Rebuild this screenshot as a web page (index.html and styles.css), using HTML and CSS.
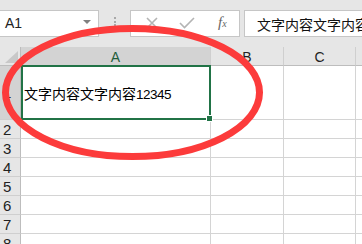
FILE: index.html
```html
<!DOCTYPE html>
<html>
<head>
<meta charset="utf-8">
<link rel="stylesheet" href="styles.css">
</head>
<body>
<div class="app">
  <div class="formula-row">
    <div class="namebox"><span class="nb-text">A1</span><span class="nb-arrow"></span></div>
    <div class="sep"><i></i><i></i><i></i></div>
    <div class="fbtns">
      <svg class="ic-x" width="12" height="12" viewBox="0 0 12 12"><path d="M1 1L11 11M11 1L1 11" stroke="#b4b4b4" stroke-width="1.6" fill="none"/></svg>
      <svg class="ic-check" width="16" height="12" viewBox="0 0 16 12"><path d="M1 6L5.5 10.5L15 1" stroke="#b4b4b4" stroke-width="1.6" fill="none"/></svg>
      <span class="fx">f<sub>x</sub></span>
    </div>
    <div class="finput">文字内容文字内容文字内容12345</div>
  </div>
  <div class="grid">
    <div class="corner"><span class="tri"></span></div>
    <div class="ch sel">A</div>
    <div class="ch">B</div>
    <div class="ch">C</div>
    <div class="ch"></div>

    <div class="rh sel r1">1</div>
    <div class="cell r1 a1"><span class="cjk">文字内容文字内容</span><span class="num">12345</span></div>
    <div class="cell r1"></div>
    <div class="cell r1"></div>
    <div class="cell r1"></div>

    <div class="rh">2</div><div class="cell"></div><div class="cell"></div><div class="cell"></div><div class="cell"></div>
    <div class="rh">3</div><div class="cell"></div><div class="cell"></div><div class="cell"></div><div class="cell"></div>
    <div class="rh">4</div><div class="cell"></div><div class="cell"></div><div class="cell"></div><div class="cell"></div>
    <div class="rh">5</div><div class="cell"></div><div class="cell"></div><div class="cell"></div><div class="cell"></div>
    <div class="rh">6</div><div class="cell"></div><div class="cell"></div><div class="cell"></div><div class="cell"></div>
    <div class="rh">7</div><div class="cell"></div><div class="cell"></div><div class="cell"></div><div class="cell"></div>
    <div class="rh">8</div><div class="cell"></div><div class="cell"></div><div class="cell"></div><div class="cell"></div>

    <div class="selection"><span class="handle"></span></div>
  </div>
  <svg class="circle" width="362" height="244" viewBox="0 0 362 244">
    <ellipse cx="132.5" cy="92.5" rx="127" ry="64" fill="none" stroke="#fc3b3b" stroke-width="7"/>
  </svg>
</div>
</body>
</html>
```

FILE: styles.css
```css
html, body {
  margin: 0;
  padding: 0;
}
body {
  width: 362px;
  height: 244px;
  overflow: hidden;
  background: #e6e6e6;
  font-family: "Liberation Sans", Arial, "Noto Sans CJK SC", sans-serif;
}
.app {
  position: relative;
  width: 362px;
  height: 244px;
  overflow: hidden;
}
.formula-row {
  display: flex;
  align-items: stretch;
  height: 27px;
  padding-top: 10px;
  box-sizing: content-box;
}
.namebox {
  width: 99px;
  box-sizing: border-box;
  background: #fff;
  border: 1px solid #c6c6c6;
  border-left: none;
  display: flex;
  align-items: center;
  justify-content: space-between;
  padding: 0 7px 1px 5px;
}
.nb-text {
  font-size: 14px;
  color: #222;
}
.nb-arrow {
  width: 0;
  height: 0;
  border-left: 4px solid transparent;
  border-right: 4px solid transparent;
  border-top: 4px solid #808080;
  margin-top: -3px;
}
.sep {
  width: 31px;
  display: flex;
  flex-direction: column;
  align-items: center;
  justify-content: center;
  gap: 1.5px;
  padding-bottom: 4px;
  box-sizing: border-box;
}
.sep i {
  display: block;
  width: 2px;
  height: 2px;
  background: #a8a8a8;
}
.fbtns {
  width: 110px;
  box-sizing: border-box;
  background: #fff;
  border: 1px solid #c6c6c6;
  display: flex;
  align-items: center;
  padding: 0 0 2px 15px;
}
.ic-x {
  margin-right: 21px;
}
.ic-check {
  margin-right: 23px;
}
.fx {
  font-family: "Liberation Serif", "Times New Roman", serif;
  font-style: italic;
  font-size: 15px;
  color: #666;
  line-height: 1;
}
.fx sub {
  font-size: 10px;
  vertical-align: baseline;
}
.finput {
  flex: 1;
  margin-left: 4px;
  background: #fff;
  border: 1px solid #c6c6c6;
  border-right: none;
  white-space: nowrap;
  overflow: hidden;
  display: flex;
  align-items: center;
  padding-left: 12px;
  font-size: 14px;
  color: #111;
}
.grid {
  position: relative;
  margin-top: 10px;
  display: grid;
  grid-template-columns: 21px 190px 73px 72px 40px;
  grid-template-rows: 19px 54px repeat(7, 19px);
  background: #fff;
}
.corner {
  position: relative;
  background: #e6e6e6;
  border-right: 1px solid #bdbdbd;
  border-bottom: 1px solid #bdbdbd;
}
.tri {
  position: absolute;
  right: 2px;
  bottom: 2px;
  width: 0;
  height: 0;
  border-left: 13px solid transparent;
  border-bottom: 12px solid #c8c8c8;
}
.ch {
  background: #e6e6e6;
  border-right: 1px solid #cfcfcf;
  border-bottom: 1px solid #bdbdbd;
  display: flex;
  align-items: center;
  justify-content: center;
  font-size: 14px;
  color: #222;
  padding-top: 1px;
}
.ch.sel {
  background: #d3d3d3;
  color: #1f5c3a;
}
.rh {
  background: #e6e6e6;
  border-right: 1px solid #bdbdbd;
  border-bottom: 1px solid #cfcfcf;
  display: flex;
  align-items: center;
  padding-left: 3px;
  font-size: 15px;
  color: #222;
}
.rh.sel {
  background: #d3d3d3;
}
.cell {
  border-right: 1px solid #d4d4d4;
  border-bottom: 1px solid #d4d4d4;
}
.a1 {
  display: flex;
  align-items: center;
  padding-left: 3px;
  padding-top: 2px;
  font-size: 14px;
  color: #000;
  white-space: nowrap;
}
.cjk {
  line-height: 16px;
}
.num {
  font-size: 13.5px;
  letter-spacing: -0.5px;
  line-height: 16px;
  position: relative;
  top: 1px;
}
.selection {
  position: absolute;
  left: 21px;
  top: 18px;
  width: 190px;
  height: 55px;
  box-sizing: border-box;
  border: 2px solid #217346;
}
.handle {
  position: absolute;
  right: -4px;
  bottom: -4px;
  width: 5px;
  height: 5px;
  background: #217346;
  border: 1px solid #fff;
}
.circle {
  position: absolute;
  left: 0;
  top: 0;
  pointer-events: none;
}
```
